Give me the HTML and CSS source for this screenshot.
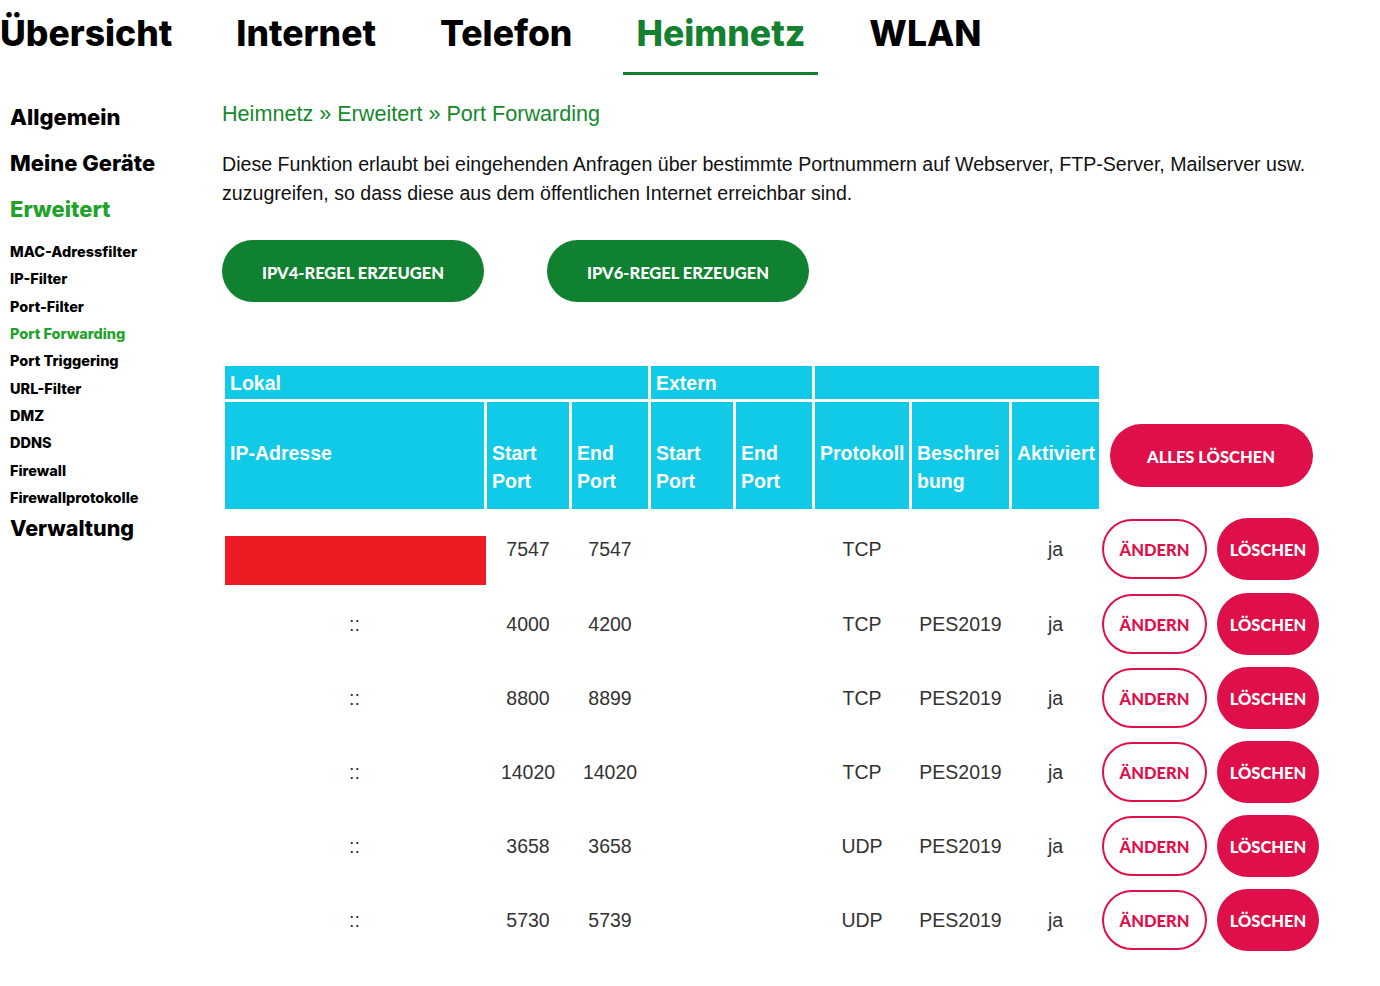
FILE: index.html
```html
<!DOCTYPE html>
<html lang="de">
<head>
<meta charset="utf-8">
<title>Heimnetz – Port Forwarding</title>
<link rel="stylesheet" href="styles.css">
</head>
<body>
<header class="topbar">
  <nav class="tabs">
    <a class="tab">Übersicht</a>
    <a class="tab">Internet</a>
    <a class="tab">Telefon</a>
    <a class="tab tab-active">Heimnetz</a>
    <a class="tab">WLAN</a>
  </nav>
</header>
<div class="layout">
  <aside class="sidebar">
    <ul class="menu">
      <li class="menu-item">Allgemein</li>
      <li class="menu-item">Meine Geräte</li>
      <li class="menu-item menu-active">Erweitert</li>
    </ul>
    <ul class="submenu">
      <li class="sub-item">MAC-Adressfilter</li>
      <li class="sub-item">IP-Filter</li>
      <li class="sub-item">Port-Filter</li>
      <li class="sub-item sub-active">Port Forwarding</li>
      <li class="sub-item">Port Triggering</li>
      <li class="sub-item">URL-Filter</li>
      <li class="sub-item">DMZ</li>
      <li class="sub-item">DDNS</li>
      <li class="sub-item">Firewall</li>
      <li class="sub-item">Firewallprotokolle</li>
    </ul>
    <ul class="menu">
      <li class="menu-item menu-last">Verwaltung</li>
    </ul>
  </aside>
  <main class="content">
    <div class="breadcrumb">Heimnetz » Erweitert » Port Forwarding</div>
    <p class="intro">Diese Funktion erlaubt bei eingehenden Anfragen über bestimmte Portnummern auf Webserver, FTP-Server, Mailserver usw. zuzugreifen, so dass diese aus dem öffentlichen Internet erreichbar sind.</p>
    <div class="actions">
      <button class="btn btn-green">IPV4-REGEL ERZEUGEN</button>
      <button class="btn btn-green">IPV6-REGEL ERZEUGEN</button>
    </div>
    <table class="pf-table">
      <colgroup>
        <col class="c-ip"><col class="c-port1"><col class="c-port2"><col class="c-port1"><col class="c-port2"><col class="c-proto"><col class="c-desc"><col class="c-act"><col class="c-btn">
      </colgroup>
      <thead>
        <tr class="head-group">
          <th colspan="3">Lokal</th>
          <th colspan="2">Extern</th>
          <th colspan="3"></th>
          <th class="no-bg"></th>
        </tr>
        <tr class="head-cols">
          <th>IP-Adresse</th>
          <th>Start<br>Port</th>
          <th>End<br>Port</th>
          <th>Start<br>Port</th>
          <th>End<br>Port</th>
          <th>Protokoll</th>
          <th>Beschrei<br>bung</th>
          <th>Aktiviert</th>
          <th class="no-bg btn-cell"><button class="btn btn-red btn-all">ALLES LÖSCHEN</button></th>
        </tr>
      </thead>
      <tbody>
        <tr class="row-first">
          <td class="ip-redacted"><div class="redacted"></div></td>
          <td>7547</td><td>7547</td><td></td><td></td>
          <td>TCP</td><td></td><td>ja</td>
          <td class="ops"><div class="ops-inner"><button class="btn btn-outline">ÄNDERN</button><button class="btn btn-red btn-del">LÖSCHEN</button></div></td>
        </tr>
        <tr>
          <td>::</td>
          <td>4000</td><td>4200</td><td></td><td></td>
          <td>TCP</td><td>PES2019</td><td>ja</td>
          <td class="ops"><div class="ops-inner"><button class="btn btn-outline">ÄNDERN</button><button class="btn btn-red btn-del">LÖSCHEN</button></div></td>
        </tr>
        <tr>
          <td>::</td>
          <td>8800</td><td>8899</td><td></td><td></td>
          <td>TCP</td><td>PES2019</td><td>ja</td>
          <td class="ops"><div class="ops-inner"><button class="btn btn-outline">ÄNDERN</button><button class="btn btn-red btn-del">LÖSCHEN</button></div></td>
        </tr>
        <tr>
          <td>::</td>
          <td>14020</td><td>14020</td><td></td><td></td>
          <td>TCP</td><td>PES2019</td><td>ja</td>
          <td class="ops"><div class="ops-inner"><button class="btn btn-outline">ÄNDERN</button><button class="btn btn-red btn-del">LÖSCHEN</button></div></td>
        </tr>
        <tr>
          <td>::</td>
          <td>3658</td><td>3658</td><td></td><td></td>
          <td>UDP</td><td>PES2019</td><td>ja</td>
          <td class="ops"><div class="ops-inner"><button class="btn btn-outline">ÄNDERN</button><button class="btn btn-red btn-del">LÖSCHEN</button></div></td>
        </tr>
        <tr>
          <td>::</td>
          <td>5730</td><td>5739</td><td></td><td></td>
          <td>UDP</td><td>PES2019</td><td>ja</td>
          <td class="ops"><div class="ops-inner"><button class="btn btn-outline">ÄNDERN</button><button class="btn btn-red btn-del">LÖSCHEN</button></div></td>
        </tr>
      </tbody>
    </table>
  </main>
</div>
</body>
</html>
```

FILE: styles.css
```css
* { box-sizing: border-box; }

html, body {
  margin: 0;
  padding: 0;
  background: #ffffff;
}

body {
  font-family: "Liberation Sans", Arial, sans-serif;
  color: #1a1a1a;
  width: 1380px;
  overflow: hidden;
}

/* ---------- top navigation ---------- */
.topbar {
  height: 75px;
}

.tabs {
  display: flex;
  gap: 38px;
  margin-left: -13px;
}

.tab {
  display: block;
  height: 75px;
  padding: 12px 13px 0;
  border-bottom: 3px solid transparent;
  font-family: Inter, Lato, "Noto Sans", sans-serif;
  font-weight: 800;
  font-size: 35.5px;
  line-height: 44px;
  color: #000;
  text-decoration: none;
}

.tab-active {
  color: #138130;
  border-bottom-color: #138130;
}

/* ---------- layout ---------- */
.layout {
  display: flex;
}

.sidebar {
  width: 222px;
  flex: none;
  padding: 19px 0 0 10px;
  font-family: Inter, Lato, "Noto Sans", sans-serif;
  font-weight: 800;
  color: #000;
}

.menu, .submenu {
  list-style: none;
  margin: 0;
  padding: 0;
}

.menu-item {
  font-size: 22px;
  line-height: 46px;
}

.menu-last {
  font-size: 21.5px;
  line-height: 34px;
}

.menu-active {
  color: #1fa32b;
}

.submenu {
  margin-top: 6px;
}

.sub-item {
  font-size: 14.5px;
  line-height: 27.33px;
}

.sub-active {
  color: #1fa32b;
}

/* ---------- content ---------- */
.content {
  flex: 1;
  padding: 24px 20px 0 0;
}

.breadcrumb {
  font-size: 21.6px;
  line-height: 30px;
  color: #15892c;
}

.intro {
  margin: 21px 0 0;
  font-size: 19.6px;
  line-height: 29px;
  color: #111;
}

.actions {
  display: flex;
  gap: 63px;
  margin-top: 32px;
}

.btn {
  font-family: Lato, "Noto Sans", sans-serif;
  font-weight: 900;
  border: none;
  cursor: pointer;
  padding: 3px 0 0;
  color: #fff;
}

.btn-green {
  width: 262px;
  height: 62px;
  border-radius: 31px;
  background: #108130;
  font-size: 16.5px;
}

.btn-red {
  background: #df0f4a;
  color: #fff;
}

.btn-all {
  width: 203px;
  height: 63px;
  border-radius: 32px;
  font-size: 16.5px;
}

.btn-outline {
  width: 105px;
  height: 60px;
  border-radius: 30px;
  border: 2px solid #df0f4a;
  background: #fff;
  color: #df0f4a;
  font-size: 16.5px;
}

.btn-del {
  width: 102px;
  height: 62px;
  border-radius: 31px;
  font-size: 16.5px;
}

/* ---------- table ---------- */
.pf-table {
  margin-top: 61px;
  margin-left: 0;
  table-layout: fixed;
  width: 1101px;
  border-collapse: separate;
  border-spacing: 3px;
  font-size: 19.5px;
}

.c-ip { width: 259px; }
.c-port1 { width: 82px; }
.c-port2 { width: 76px; }
.c-proto { width: 94px; }
.c-desc { width: 97px; }
.c-act { width: 87px; }
.c-btn { width: 218px; }

.pf-table th {
  background: #10cae8;
  color: #fff;
  font-weight: bold;
  text-align: left;
  padding: 0 2px 0 5px;
  white-space: nowrap;
}

.pf-table th.no-bg {
  background: transparent;
}

.head-group th {
  height: 33px;
  line-height: 22px;
  vertical-align: middle;
}

.head-cols th {
  height: 107px;
  line-height: 28px;
  vertical-align: top;
  padding-top: 37px;
}

.head-cols th.btn-cell {
  padding: 0;
  vertical-align: middle;
  text-align: center;
}

.pf-table tbody tr {
  height: 71px;
}

.pf-table tbody tr.row-first {
  height: 73px;
}

.pf-table td {
  padding: 0;
  text-align: center;
  vertical-align: middle;
  color: #333;
  line-height: 22px;
  white-space: nowrap;
}

.pf-table td.ip-redacted {
  vertical-align: bottom;
  text-align: left;
}

.redacted {
  width: 261px;
  height: 49px;
  background: #ed1c24;
}

.ops-inner {
  display: flex;
  align-items: center;
  gap: 10px;
}
```
